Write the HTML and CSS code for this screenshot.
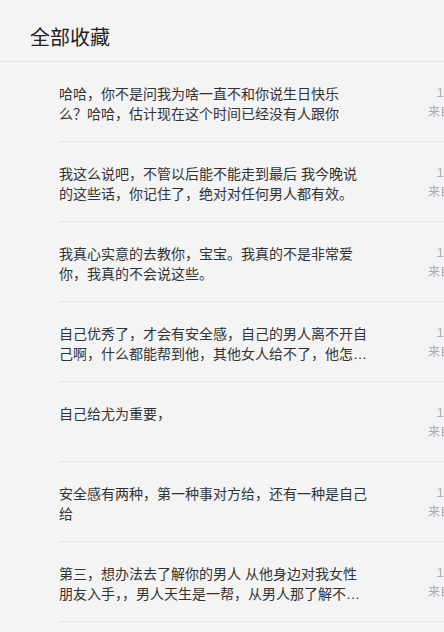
FILE: index.html
```html
<html>

<head>
    <meta charset="utf-8">
    <link rel="stylesheet" href="styles.css">
</head>

<body>
    <div class="header">
        <h1>全部收藏</h1>
    </div>
    <div class="list">
        <div class="item">
            <p class="content">哈哈，你不是问我为啥一直不和你说生日快乐<br>么？哈哈，估计现在这个时间已经没有人跟你</p>
            <div class="meta">
                <span class="time">12:30</span>
                <span class="from">来自微博</span>
            </div>
        </div>
        <div class="item">
            <p class="content">我这么说吧，不管以后能不能走到最后 我今晚说的这些话，你记住了，绝对对任何男人都有效。</p>
            <div class="meta">
                <span class="time">12:28</span>
                <span class="from">来自微博</span>
            </div>
        </div>
        <div class="item">
            <p class="content">我真心实意的去教你，宝宝。我真的不是非常爱你，我真的不会说这些。</p>
            <div class="meta">
                <span class="time">12:25</span>
                <span class="from">来自微博</span>
            </div>
        </div>
        <div class="item">
            <p class="content">自己优秀了，才会有安全感，自己的男人离不开自己啊，什么都能帮到他，其他女人给不了，他怎么会离开你呢。</p>
            <div class="meta">
                <span class="time">12:21</span>
                <span class="from">来自微博</span>
            </div>
        </div>
        <div class="item">
            <p class="content">自己给尤为重要，</p>
            <div class="meta">
                <span class="time">12:19</span>
                <span class="from">来自微博</span>
            </div>
        </div>
        <div class="item">
            <p class="content">安全感有两种，第一种事对方给，还有一种是自己给</p>
            <div class="meta">
                <span class="time">12:16</span>
                <span class="from">来自微博</span>
            </div>
        </div>
        <div class="item">
            <p class="content">第三，想办法去了解你的男人 从他身边对我女性朋友入手，，男人天生是一帮，从男人那了解不到的，女人那里都能知道。</p>
            <div class="meta">
                <span class="time">12:12</span>
                <span class="from">来自微博</span>
            </div>
        </div>
    </div>
</body>

</html>
```

FILE: styles.css
```css
html, body {
    overflow: hidden;
}

body {
    margin: 0;
    width: 444px;
    background: #f4f4f4;
    color: #333;
    font-family: "Liberation Sans", "Noto Sans CJK SC", sans-serif;
}

.header {
    height: 62px;
    box-sizing: border-box;
    padding: 24px 0 0 30px;
    border-bottom: 1px solid #e2e2e2;
}

h1 {
    margin: 0;
    font-size: 20px;
    line-height: 28px;
    font-weight: normal;
    color: #222;
}

.item {
    display: flex;
    width: 423px;
    height: 80px;
    box-sizing: border-box;
    margin-left: 59px;
    padding-top: 22px;
    border-bottom: 1px solid #e4e4e4;
}

.content {
    margin: 0;
    width: 308px;
    flex-shrink: 0;
    font-size: 14px;
    line-height: 20px;
    height: 40px;
    overflow: hidden;
    display: -webkit-box;
    -webkit-box-orient: vertical;
    -webkit-line-clamp: 2;
}

.meta {
    display: flex;
    flex-direction: column;
    align-items: center;
    width: 60px;
    flex-shrink: 0;
    margin-left: 55px;
    color: #aaa;
    font-size: 12px;
    line-height: 19px;
}
```
